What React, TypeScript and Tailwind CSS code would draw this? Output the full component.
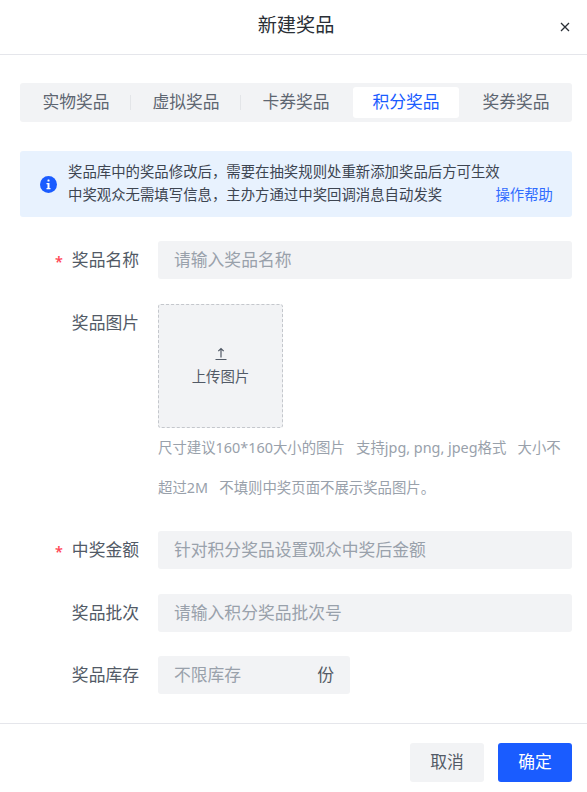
const font = "font-['Noto_Sans','Noto_Sans_CJK_SC',sans-serif]";

function Field({
  label,
  required,
  placeholder,
}: {
  label: string;
  required?: boolean;
  placeholder: string;
}) {
  return (
    <div className="flex h-[38px] items-center">
      <Label text={label} required={required} />
      <div className="ml-[19px] flex h-[38px] flex-1 items-center rounded-[3px] bg-[#f2f3f5] pl-4 text-[16.8px] text-[#99a1ab]">
        {placeholder}
      </div>
    </div>
  );
}

function Label({ text, required }: { text: string; required?: boolean }) {
  return (
    <div className="flex w-[119px] shrink-0 items-center justify-end text-[16.8px] text-[#525a66]">
      {required && <span className="mr-[9px] translate-y-[2px] text-[14.4px] font-semibold text-[#ff4757]">*</span>}
      <span>{text}</span>
    </div>
  );
}

export default function App() {
  const tabs = ["实物奖品", "虚拟奖品", "卡券奖品", "积分奖品", "奖券奖品"];
  return (
    <div className={`${font} flex h-[792px] w-[587px] flex-col bg-white`}>
      <header className="relative flex h-[55px] shrink-0 items-center justify-center border-b border-[#e5e6eb] pb-[3px] pl-[5px]">
        <span className="text-[19.2px] text-[#2a2f36]">新建奖品</span>
        <button className="absolute top-[22px] right-[17px] text-[#2a2f36]">
          <svg width="10" height="10" viewBox="0 0 10 10" fill="none" stroke="currentColor" strokeWidth="1.3">
            <path d="M1 1l8 8M9 1l-8 8" />
          </svg>
        </button>
      </header>

      <main className="flex-1 px-5 pt-[28px] pr-[15px]">
        <div className="flex h-[39px] items-center rounded-[3px] bg-[#f2f3f5] px-px py-1">
          {tabs.map((t, i) => (
            <div key={t} className="relative flex h-[31px] flex-1 items-center justify-center">
              <div
                className={
                  i === 3
                    ? "mx-[2px] flex h-full w-full items-center justify-center rounded-[3px] bg-white pb-[2px] text-[16.8px] text-[#1a5cff]"
                    : "pb-[2px] text-[16.8px] text-[#5e6671]"
                }
              >
                {t}
              </div>
              {i < 2 && <span className="absolute top-[8px] right-0 h-[15px] w-px bg-[#e3e5e8]" />}
            </div>
          ))}
        </div>

        <div className="mt-[29px] flex h-[66px] items-center rounded-[3px] bg-[#e8f2fe] pr-[19px] pl-5 text-[14.4px] leading-[23px] text-[#3d4551]">
          <svg width="17" height="17" viewBox="0 0 17 17" className="shrink-0">
            <circle cx="8.5" cy="8.5" r="8.5" fill="#1a5cff" />
            <rect x="7.500" y="3.500" width="2" height="2" rx="0.5" fill="#fff" />
            <path d="M6.500 7h3v5h1v1.300h-4V12h1V8.300H6.500z" fill="#fff" />
          </svg>
          <div className="ml-[11px] flex-1 pb-[2px]">
            <div>奖品库中的奖品修改后，需要在抽奖规则处重新添加奖品后方可生效</div>
            <div className="flex justify-between">
              <span>中奖观众无需填写信息，主办方通过中奖回调消息自动发奖</span>
              <a className="text-[#2f6bff]">操作帮助</a>
            </div>
          </div>
        </div>

        <div className="mt-6">
          <Field label="奖品名称" required placeholder="请输入奖品名称" />

          <div className="mt-[25px] flex items-start">
            <div className="flex h-[38px] items-center">
              <Label text="奖品图片" />
            </div>
            <div className="ml-[19px] flex-1">
              <div className="flex h-[124px] w-[125px] flex-col items-center justify-center rounded-[3px] border border-dashed border-[#c4c7cc] bg-[#f2f3f5] pt-[2px] text-[#525a66]">
                <svg width="14" height="14" viewBox="0 0 14 14" fill="none" stroke="currentColor" strokeWidth="1.2" className="mb-[6px]">
                  <path d="M7 10.500V1.500M4.300 4.200L7 1.500 9.700 4.200M1.500 12.500h11" />
                </svg>
                <span className="text-[14.4px] leading-[20px]">上传图片</span>
              </div>
              <div className="mt-0 text-[14.4px] leading-[40px] text-[#99a1ab]">
                尺寸建议160*160大小的图片&nbsp;&nbsp;&nbsp;支持jpg, png, jpeg格式&nbsp;&nbsp;&nbsp;大小不超过2M&nbsp;&nbsp;&nbsp;不填则中奖页面不展示奖品图片。
              </div>
            </div>
          </div>

          <div className="mt-[23px]">
            <Field label="中奖金额" required placeholder="针对积分奖品设置观众中奖后金额" />
          </div>
          <div className="mt-[25px]">
            <Field label="奖品批次" placeholder="请输入积分奖品批次号" />
          </div>
          <div className="mt-6 flex h-[38px] items-center">
            <Label text="奖品库存" />
            <div className="ml-[19px] flex h-[38px] w-[192px] items-center justify-between rounded-[3px] bg-[#f2f3f5] px-4 text-[16.8px]">
              <span className="text-[#99a1ab]">不限库存</span>
              <span className="text-[#525a66]">份</span>
            </div>
          </div>
        </div>
      </main>

      <footer className="flex h-[69px] shrink-0 justify-end gap-[14px] border-t border-[#e5e6eb] pt-[19px] pr-[15px]">
        <button className="h-[39px] w-[74px] rounded-[3px] bg-[#f2f3f5] pb-[2px] text-[16.8px] text-[#525a66]">取消</button>
        <button className="h-[39px] w-[74px] rounded-[3px] bg-[#1a5cff] pb-[2px] text-[16.8px] text-white">确定</button>
      </footer>
    </div>
  );
}
